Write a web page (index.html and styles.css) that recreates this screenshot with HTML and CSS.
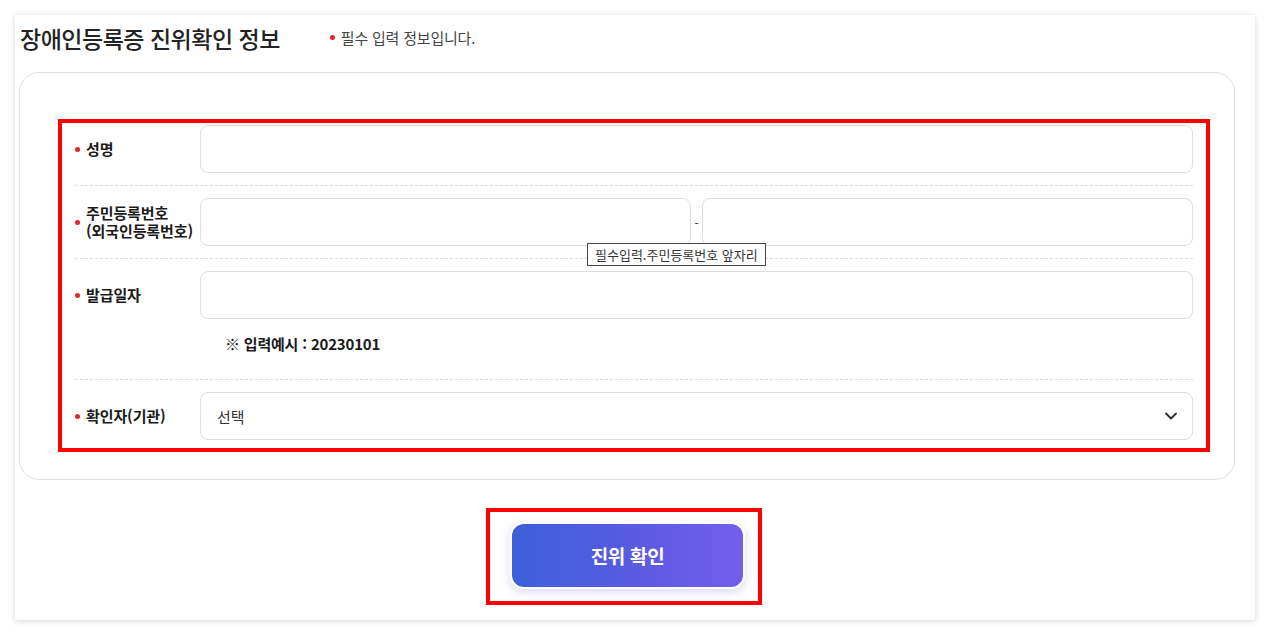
FILE: index.html
```html
<!DOCTYPE html>
<html lang="ko">
<head>
<meta charset="utf-8">
<title>장애인등록증 진위확인</title>
<link rel="stylesheet" href="styles.css">
</head>
<body>
<div class="page">
  <section class="panel">
    <header class="head">
      <h2 class="title">장애인등록증 진위확인 정보</h2>
      <p class="note"><span class="dot"></span>필수 입력 정보입니다.</p>
    </header>
    <div class="box">
      <div class="form">
        <div class="row first">
          <div class="label"><span class="dot"></span><span>성명</span></div>
          <div class="field"><input class="input" type="text"></div>
        </div>
        <div class="row">
          <div class="label"><span class="dot"></span><span class="two">주민등록번호<br>(외국인등록번호)</span></div>
          <div class="field split">
            <input class="input" type="text">
            <span class="dash">-</span>
            <input class="input" type="password">
            <span class="tip">필수입력.주민등록번호 앞자리</span>
          </div>
        </div>
        <div class="row tall">
          <div class="label top"><span class="dot"></span><span>발급일자</span></div>
          <div class="field col">
            <input class="input" type="text">
            <p class="example">※ 입력예시 : 20230101</p>
          </div>
        </div>
        <div class="row last">
          <div class="label"><span class="dot"></span><span>확인자(기관)</span></div>
          <div class="field">
            <div class="select">
              <span>선택</span>
              <svg class="chev" width="14" height="10" viewBox="0 0 14 10"><path d="M2 2.5 L7 7.5 L12 2.5" fill="none" stroke="#333" stroke-width="2" stroke-linecap="round" stroke-linejoin="round"/></svg>
            </div>
          </div>
        </div>
      </div>
    </div>
    <div class="actions">
      <div class="btn-frame"><button class="btn" type="button">진위 확인</button></div>
    </div>
  </section>
</div>
</body>
</html>
```
FILE: styles.css
```css
* { box-sizing: border-box; }
html, body { margin: 0; padding: 0; background: #fff; }
body { font-family: "Noto Sans CJK KR", "Noto Sans", sans-serif; color: #222; }
.page { padding: 15px; }
.panel {
  width: 1240px;
  height: 605px;
  background: #fff;
  box-shadow: 0 1px 6px rgba(0,0,0,0.16);
  padding: 6px 20px 0 4px;
}
.head { display: flex; align-items: center; height: 34px; margin-bottom: 17px; }
.title { margin: 0 0 0 1px; font-size: 23px; font-weight: 500; color: #222; line-height: 34px; letter-spacing: -0.5px; }
.note { margin: -2px 0 0 50px; font-size: 15px; color: #444; display: flex; align-items: center; letter-spacing: -0.2px; }
.dot { display: inline-block; width: 5px; height: 5px; border-radius: 50%; background: #e0262c; margin-right: 6px; flex: none; }
.box {
  border: 1px solid #dedede;
  border-radius: 20px;
  padding: 46px 24px 27px 38px;
}
.form { border: 4px solid #ff0000; padding: 0 13px; }
.row { display: flex; padding: 12px 0; border-bottom: 1px dashed #dddddd; }
.row.first { padding-top: 2px; }
.row.tall { padding-bottom: 25px; }
.row.last { border-bottom: 0; padding-bottom: 8px; }
.label {
  width: 125px; flex: none;
  display: flex; align-items: center;
  font-size: 15px; font-weight: 700; color: #1a1a1a; line-height: 18px; letter-spacing: -0.1px;
}
.label .two { line-height: 18px; }
.label.top { height: 48px; }
.field { flex: 1; display: flex; align-items: center; position: relative; }
.field.col { flex-direction: column; align-items: stretch; }
.input {
  width: 100%; height: 48px;
  border: 1px solid #dddddd; border-radius: 8px;
  background: #fff; font: inherit; padding: 0 16px; outline: none;
}
.split .input { flex: 1; width: auto; min-width: 0; }
.dash { width: 11px; text-align: center; font-size: 12px; color: #333; }
.tip {
  position: absolute; left: 387px; top: 45px;
  background: #fff; border: 1px solid #444; color: #333;
  font-size: 13px; line-height: 21px; padding: 0 7px; white-space: nowrap;
}
.example { margin: 15px 0 0 25px; font-size: 15px; font-weight: 700; line-height: 20px; color: #1a1a1a; letter-spacing: -0.2px; }
.select {
  width: 100%; height: 48px;
  border: 1px solid #dddddd; border-radius: 8px;
  display: flex; align-items: center; justify-content: space-between;
  padding: 0 14px 0 16px; font-size: 15px; color: #333;
}
.chev { display: block; }
.actions { display: flex; justify-content: center; margin-top: 28px; }
.btn-frame { border: 4px solid #ff0000; padding: 10px 13px 12px 20px; margin-right: 6px; }
.btn {
  display: block; width: 235px; height: 67px;
  border: 2px solid #fff; border-radius: 14px;
  background: linear-gradient(90deg, #3c60d8 0%, #5b5be0 55%, #745eea 100%);
  box-shadow: 0 3px 10px rgba(110, 100, 220, 0.25);
  color: #fff; font: inherit; font-size: 19px; font-weight: 700; letter-spacing: -0.3px;
  cursor: pointer;
}
```
